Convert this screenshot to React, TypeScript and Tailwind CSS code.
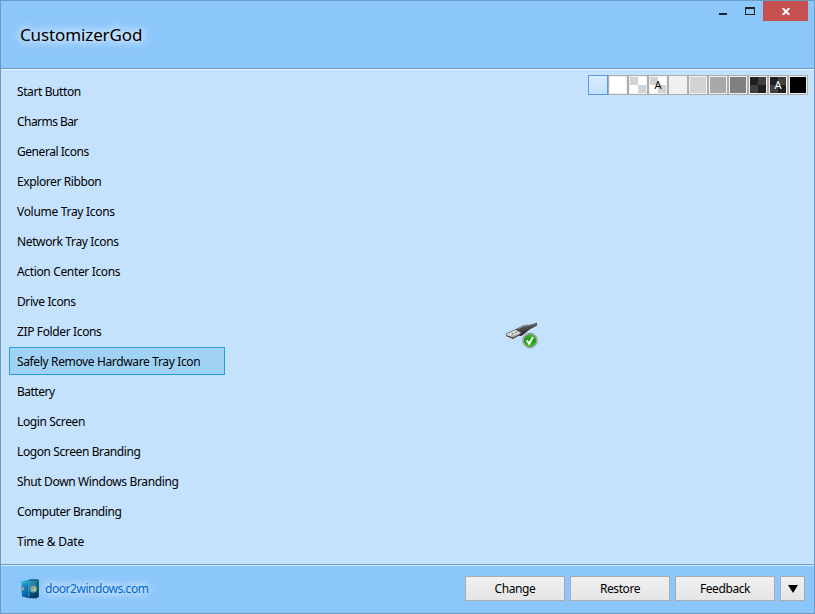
import React from "react";

const items: { label: string; tracking: string; selected?: boolean }[] = [
  { label: "Start Button", tracking: "tracking-[-0.4px]" },
  { label: "Charms Bar", tracking: "tracking-[-0.55px]" },
  { label: "General Icons", tracking: "tracking-[-0.45px]" },
  { label: "Explorer Ribbon", tracking: "tracking-[-0.4px]" },
  { label: "Volume Tray Icons", tracking: "tracking-[-0.3px]" },
  { label: "Network Tray Icons", tracking: "tracking-[-0.38px]" },
  { label: "Action Center Icons", tracking: "tracking-[-0.35px]" },
  { label: "Drive Icons", tracking: "tracking-[-0.4px]" },
  { label: "ZIP Folder Icons", tracking: "tracking-[-0.37px]" },
  { label: "Safely Remove Hardware Tray Icon", tracking: "tracking-[-0.36px]", selected: true },
  { label: "Battery", tracking: "tracking-[-0.5px]" },
  { label: "Login Screen", tracking: "tracking-[-0.38px]" },
  { label: "Logon Screen Branding", tracking: "tracking-[-0.4px]" },
  { label: "Shut Down Windows Branding", tracking: "tracking-[-0.36px]" },
  { label: "Computer Branding", tracking: "tracking-[-0.45px]" },
  { label: "Time & Date", tracking: "tracking-[-0.22px]" },
];

const glow =
  "[text-shadow:0_0_6px_rgba(255,255,255,0.8),0_0_10px_rgba(255,255,255,0.8),0_0_16px_rgba(255,255,255,0.8)]";

function Swatch({ color, letter }: { color: string; letter?: string }) {
  return (
    <div className="h-5 w-5 border border-[#adadad] bg-[#f0f0f0] p-px">
      <div
        className={`flex h-4 w-4 items-center justify-center text-[11px] leading-4 ${color}`}
      >
        {letter}
      </div>
    </div>
  );
}

const lightCheck =
  "bg-[conic-gradient(#fff_25%,#d3d3d3_0_50%,#fff_0_75%,#d3d3d3_0)]";
const darkCheck =
  "bg-[conic-gradient(#404040_25%,#202020_0_50%,#404040_0_75%,#202020_0)]";

function UsbIcon() {
  return (
    <svg className="h-[30px] w-[34px]" viewBox="0 0 34 30">
      <defs>
        <linearGradient id="plug" x1="0" y1="0" x2="0.3" y2="1">
          <stop offset="0" stopColor="#a5a5a5" />
          <stop offset="0.35" stopColor="#555" />
          <stop offset="1" stopColor="#222" />
        </linearGradient>
        <linearGradient id="metal" x1="0" y1="0" x2="0.4" y2="1">
          <stop offset="0" stopColor="#f0f0f0" />
          <stop offset="0.6" stopColor="#dcdcdc" />
          <stop offset="1" stopColor="#777" />
        </linearGradient>
        <linearGradient id="ok" x1="0" y1="0" x2="0" y2="1">
          <stop offset="0" stopColor="#45b637" />
          <stop offset="0.5" stopColor="#109a08" />
          <stop offset="1" stopColor="#35c51c" />
        </linearGradient>
      </defs>
      <path d="M23 5.2 L27 3.2 L32 1.6 L32 4.4 L28 6.8 L23 9Z" fill="#4c4c4c" />
      <path d="M24.5 5.2 L31.5 2.7" stroke="#8c8c8c" strokeWidth="0.6" />
      <path d="M10 8.4 L18 4.2 Q23 2.6 27 4.2 L26.5 7 L18.5 13.6 Q16.5 15.6 13.5 14.6Z" fill="url(#plug)" />
      <path d="M13 7.6 L19.5 4.8 L24 4.4" fill="none" stroke="#b0b0b0" strokeWidth="0.7" />
      <path d="M1.6 12.6 L10.6 8.6 L16.8 12 L8.2 17.4 L1.6 14.9Z" fill="url(#metal)" stroke="#555" strokeWidth="0.8" />
      <path d="M1.8 14.8 L8.2 17.4 L16.5 12.5" fill="none" stroke="#3c3c3c" strokeWidth="0.9" />
      <path d="M6 12.7l2-.8 1.2.7-2 .9zM9.7 11.2l1.8-.8 1.2.7-1.8.9z" fill="#666" />
      <circle cx="25" cy="19.5" r="7.3" fill="#d1d4d1" stroke="#777" strokeWidth="0.8" />
      <circle cx="25" cy="19.5" r="6" fill="url(#ok)" stroke="#148119" strokeWidth="0.5" />
      <path d="M21.7 19.4 L24.2 22.7 L28 16" fill="none" stroke="#fff" strokeWidth="2" />
    </svg>
  );
}

function DoorIcon() {
  return (
    <svg className="h-5 w-5 shrink-0" viewBox="0 0 20 20">
      <defs>
        <linearGradient id="door" x1="0" y1="0" x2="0.5" y2="1">
          <stop offset="0" stopColor="#45cee0" />
          <stop offset="0.4" stopColor="#1789c4" />
          <stop offset="1" stopColor="#0756a0" />
        </linearGradient>
        <linearGradient id="room" x1="0" y1="0" x2="0.4" y2="1">
          <stop offset="0" stopColor="#2db4c8" />
          <stop offset="0.5" stopColor="#176e91" />
          <stop offset="1" stopColor="#063c5c" />
        </linearGradient>
      </defs>
      <path d="M8 0.5h9.5v18H8z" fill="url(#room)" />
      <path d="M8.3 1h8.5M17.2 1v17" stroke="#073b58" strokeWidth="1" />
      <path d="M0 2.3L8 1v16.5l1 2-8-2z" fill="url(#door)" />
      <path d="M1 4l6.5-1M7.7 3v15" stroke="#31b8d4" strokeWidth="0.7" />
      <path d="M8.3 17l8.7 1.2-2 1.3-6-.5z" fill="#083b66" />
      <rect x="1" y="8.5" width="2" height="2.4" fill="#e39a35" />
      <circle cx="12.5" cy="10" r="3.3" fill="#3d86a8" stroke="#8ec3cc" strokeWidth="0.6" />
      <path d="M10.3 8.2l2-.7v2.3h-2z" fill="#ec8a45" />
      <path d="M12.6 7.5l2 .7v1.6h-2z" fill="#b9d86a" />
      <path d="M10.3 10.1h2v2.3l-2-.7z" fill="#7cc6e8" />
      <path d="M12.6 10.1h2v1.6l-2 .7z" fill="#f2cf60" />
    </svg>
  );
}

function Button({ children }: { children: React.ReactNode }) {
  return (
    <button className="h-[25px] w-[100px] border border-[#acacac] bg-linear-to-b from-[#f0f0f0] to-[#e5e5e5] pt-px text-center leading-[22px] tracking-[-0.42px]">
      {children}
    </button>
  );
}

export default function App() {
  return (
    <div className="flex h-[614px] w-[815px] flex-col overflow-hidden border border-[#6b9ac4] bg-[#8cc7fb] font-['Noto_Sans','Open_Sans',sans-serif] text-[12px] text-black">
      <header className="flex h-[67px] shrink-0 justify-between">
        <h1 className={`pt-5 pl-[19px] text-[17px] leading-7 tracking-[-0.12px] ${glow}`}>CustomizerGod</h1>
        <div className="mr-1.5 flex h-5">
          <button className="flex w-[27px] justify-center pt-3" aria-label="Minimize">
            <span className="h-[2px] w-2 bg-[#222]" />
          </button>
          <button className="flex w-[27px] justify-center pt-1.5" aria-label="Maximize">
            <span className="h-2 w-2.5 border border-t-2 border-[#222]" />
          </button>
          <button className="flex h-5 w-[45px] items-center justify-center bg-[#c75050] pt-px" aria-label="Close">
            <svg className="h-[7px] w-2" viewBox="0 0 8 7">
              <path d="M0.7 0L7.3 7M7.3 0L0.7 7" stroke="#fff" strokeWidth="1.9" />
            </svg>
          </button>
        </div>
      </header>

      <main className="flex h-[496px] shrink-0 border-t border-[#6b9ac4]">
        <div className="flex w-full border-t border-[#ecf6ff] bg-[#c5e2fd]">
          <nav className="flex w-[224px] shrink-0 flex-col gap-[2px] pt-[7px] pl-2">
            {items.map((item) => (
              <div
                key={item.label}
                className={`h-7 w-[216px] shrink-0 border pl-[7px] leading-7 whitespace-nowrap ${item.tracking} ${
                  item.selected ? "border-[#26a0da] bg-[#9fd2f4]" : "border-transparent"
                }`}
              >
                {item.label}
              </div>
            ))}
          </nav>
          <section className="flex flex-1 flex-col pt-[5px] pr-1.5">
            <div className="flex self-end">
              <div className="h-5 w-5 border border-[#569de5] bg-linear-to-b from-[#daecfc] to-[#c4e0fc]" />
              <Swatch color="bg-white" />
              <Swatch color={lightCheck} />
              <Swatch color={`${lightCheck} text-black`} letter="A" />
              <Swatch color="bg-[#f0f0f0]" />
              <Swatch color="bg-[#d3d3d3]" />
              <Swatch color="bg-[#a9a9a9]" />
              <Swatch color="bg-[#808080]" />
              <Swatch color={darkCheck} />
              <Swatch color={`${darkCheck} text-white`} letter="A" />
              <Swatch color="bg-black" />
            </div>
            <div className="mt-[226px] ml-[280px]">
              <UsbIcon />
            </div>
          </section>
        </div>
      </main>

      <footer className="flex flex-1 border-t border-[#6b9ac4]">
        <div className="flex w-full items-start justify-between border-t border-[#d9edff] pr-[9px] pl-5">
          <a className="flex items-center gap-1 pt-3 text-[#0066cc]">
            <DoorIcon />
            <span className={`leading-[22px] tracking-[-0.45px] ${glow}`}>door2windows.com</span>
          </a>
          <div className="flex gap-[5px] pt-2.5">
            <Button>Change</Button>
            <Button>Restore</Button>
            <Button>Feedback</Button>
            <button className="flex h-[25px] w-[25px] items-center justify-center border border-[#acacac] bg-linear-to-b from-[#f0f0f0] to-[#e5e5e5]" aria-label="More">
              <svg className="h-2 w-2.5" viewBox="0 0 10 8">
                <path d="M0 0H10L5 8Z" fill="#000" />
              </svg>
            </button>
          </div>
        </div>
      </footer>
    </div>
  );
}
